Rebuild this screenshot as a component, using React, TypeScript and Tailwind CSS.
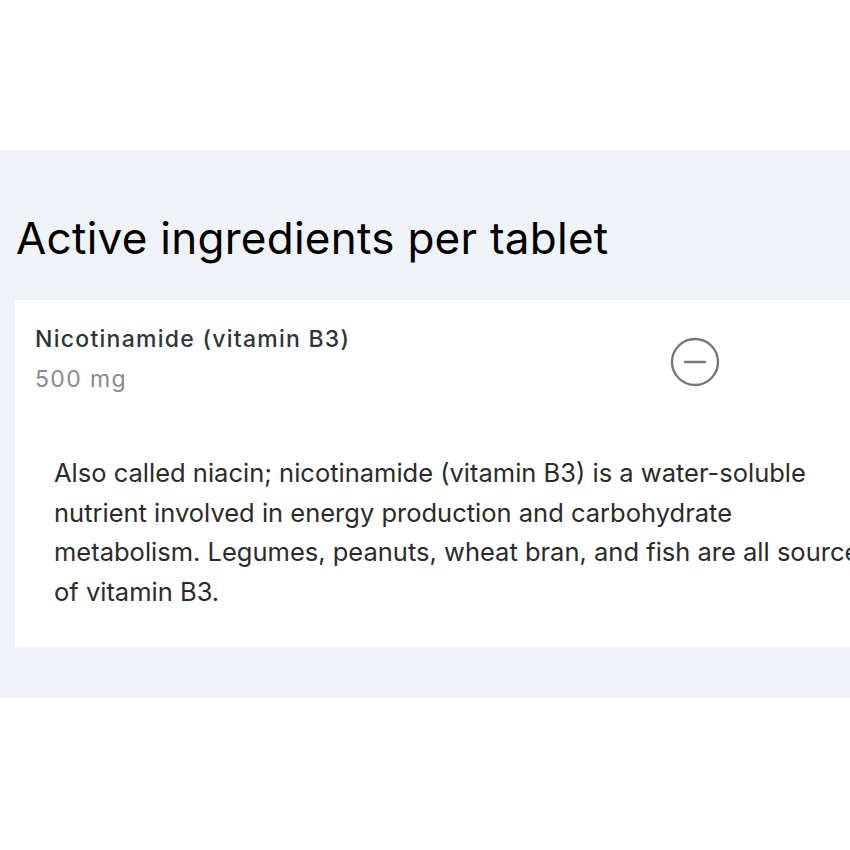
import React from 'react';

const MinusCircle = () => (
  <svg width="50" height="50" viewBox="0 0 50 50" fill="none">
    <circle cx="25" cy="25" r="23" stroke="#777777" strokeWidth="2.4" />
    <line x1="15" y1="25" x2="35" y2="25" stroke="#777777" strokeWidth="2.4" strokeLinecap="round" />
  </svg>
);

export default function App() {
  return (
    <div className="w-[850px] min-h-[850px] bg-white overflow-hidden font-['Inter',sans-serif]">
      <div className="h-[150px]" />
      <section className="bg-[#eff2f6] pt-[66px] pb-[51px] pl-[15px]">
        <h2 className="text-[44px] leading-[44px] tracking-[0.006em] text-black font-normal pl-[1px]">
          Active ingredients per tablet
        </h2>
        <div className="mt-[40px] bg-white w-[900px] pt-[19px] pb-[36px]">
          <div className="flex items-center pl-[20px]">
            <div className="w-[636px] text-[23px] leading-[40px]">
              <div className="text-[#2c3838] font-medium tracking-[0.055em]">Nicotinamide (vitamin B3)</div>
              <div className="text-[#8a8a8a] tracking-[0.06em]">500 mg</div>
            </div>
            <div className="mt-[6px] -ml-[1px]">
              <MinusCircle />
            </div>
          </div>
          <p className="mt-[54px] pl-[39px] text-[25.5px] leading-[39.5px] text-[#2b2b2b] whitespace-nowrap">
            Also called niacin; nicotinamide (vitamin B3) is a water-soluble
            <br />
            nutrient involved in energy production and carbohydrate
            <br />
            metabolism. Legumes, peanuts, wheat bran, and fish are all sources
            <br />
            of vitamin B3.
          </p>
        </div>
      </section>
    </div>
  );
}
